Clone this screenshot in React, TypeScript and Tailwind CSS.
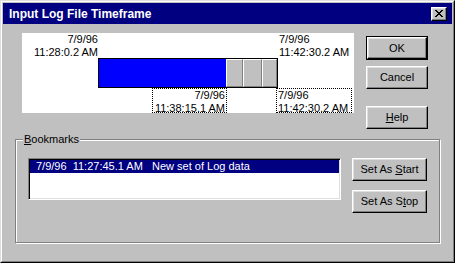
import React from "react";

const font = { fontFamily: '"Liberation Sans", Arial, sans-serif' };

function Btn({
  children,
  className = "",
}: {
  children: React.ReactNode;
  className?: string;
}) {
  return (
    <div
      className={
        "flex items-center justify-center bg-[#c0c0c0] border border-t-white border-l-white border-r-black border-b-black shadow-[inset_-1px_-1px_0_#808080,inset_1px_1px_0_#dfdfdf] text-[11px] leading-[13px] text-black " +
        className
      }
    >
      {children}
    </div>
  );
}

function CloseIcon() {
  return (
    <svg width="8" height="7" viewBox="0 0 8 7" shapeRendering="crispEdges">
      <path
        d="M0 0h2v1H0zM6 0h2v1H6zM1 1h2v1H1zM5 1h2v1H5zM2 2h4v1H2zM3 3h2v1H3zM2 4h4v1H2zM1 5h2v1H1zM5 5h2v1H5zM0 6h2v1H0zM6 6h2v1H6z"
        fill="#000"
      />
    </svg>
  );
}

function Cell({ w }: { w: string }) {
  return (
    <div
      className={
        "h-full bg-[#c0c0c0] border border-t-white border-l-white border-r-[#808080] border-b-[#808080] " +
        w
      }
    />
  );
}

export default function App() {
  return (
    <div className="w-[456px] h-[268px] bg-white" style={font}>
      <div className="w-[455px] h-[263px] border border-t-[#dfdfdf] border-l-[#dfdfdf] border-r-black border-b-black">
        <div className="w-full h-full border border-t-white border-l-white border-r-[#808080] border-b-[#808080] bg-[#c0c0c0] p-[1px] flex flex-col">
          {/* Title bar */}
          <div className="h-[21px] bg-[#000080] flex items-center justify-between pl-[6px] pr-[5px] shrink-0">
            <span className="text-white font-bold text-[12px] leading-[14px]">
              Input Log File Timeframe
            </span>
            <div className="w-[16px] h-[14px] flex items-center justify-center bg-[#c0c0c0] border border-t-white border-l-white border-r-black border-b-black shadow-[inset_-1px_-1px_0_#808080,inset_1px_1px_0_#dfdfdf]">
              <CloseIcon />
            </div>
          </div>

          {/* Top section */}
          <div className="flex items-start text-[11px] leading-[13px] text-black">
            <div className="ml-[19px] mt-[9px] w-[332px] h-[80px] bg-white flex flex-col">
              <div className="h-[25px] flex">
                <div className="ml-[8px] w-[68px] text-right">
                  <div>7/9/96</div>
                  <div>11:28:0.2 AM</div>
                </div>
                <div className="ml-[181px]">
                  <div>7/9/96</div>
                  <div>11:42:30.2 AM</div>
                </div>
              </div>
              <div className="ml-[76px] w-[180px] h-[30px] border border-black flex">
                <div className="w-[127px] h-full bg-[#0000ff]" />
                <Cell w="w-[17px]" />
                <Cell w="w-[19px]" />
                <Cell w="w-[15px]" />
              </div>
              <div className="flex h-[25px]">
                <div className="ml-[130px] w-[75px] h-full border border-dotted border-black text-right pr-[1px]">
                  <div>7/9/96</div>
                  <div>11:38:15.1 AM</div>
                </div>
                <div className="ml-[49px] w-[76px] h-full border border-dotted border-black pl-[1px]">
                  <div>7/9/96</div>
                  <div>11:42:30.2 AM</div>
                </div>
              </div>
            </div>

            <div className="ml-[12px] mt-[12px] w-[62px] flex flex-col">
              <div className="border border-black h-[24px] flex">
                <Btn className="flex-1">OK</Btn>
              </div>
              <Btn className="mt-[6px] h-[23px]">Cancel</Btn>
              <Btn className="mt-[17px] h-[23px]">
                <span>
                  <span className="underline">H</span>elp
                </span>
              </Btn>
            </div>
          </div>

          {/* Bookmarks group */}
          <div className="relative ml-[12px] mt-[10px] w-[425px] h-[104px] border border-[#808080] shadow-[inset_1px_1px_0_#fff,1px_1px_0_#fff] flex items-start pl-[12px] pt-[18px] text-[11px] leading-[13px] text-black">
            <span className="absolute left-[7px] top-[-7px] px-[1px] bg-[#c0c0c0]">
              <span className="underline">B</span>ookmarks
            </span>
            <div className="w-[313px] h-[42px] bg-white border border-t-[#808080] border-l-[#808080] border-b-white border-r-white shadow-[inset_1px_1px_0_#000,inset_-1px_-1px_0_#dfdfdf] p-[1px]">
              <div className="h-[13px] bg-[#000080] text-white pl-[6px] whitespace-pre">
                {"7/9/96  11:27:45.1 AM   New set of Log data"}
              </div>
            </div>
            <div className="ml-[11px] w-[75px] flex flex-col">
              <Btn className="h-[23px]">
                <span>
                  Set As <span className="underline">S</span>tart
                </span>
              </Btn>
              <Btn className="mt-[9px] h-[23px]">
                <span>
                  Set As S<span className="underline">t</span>op
                </span>
              </Btn>
            </div>
          </div>
        </div>
      </div>
    </div>
  );
}
